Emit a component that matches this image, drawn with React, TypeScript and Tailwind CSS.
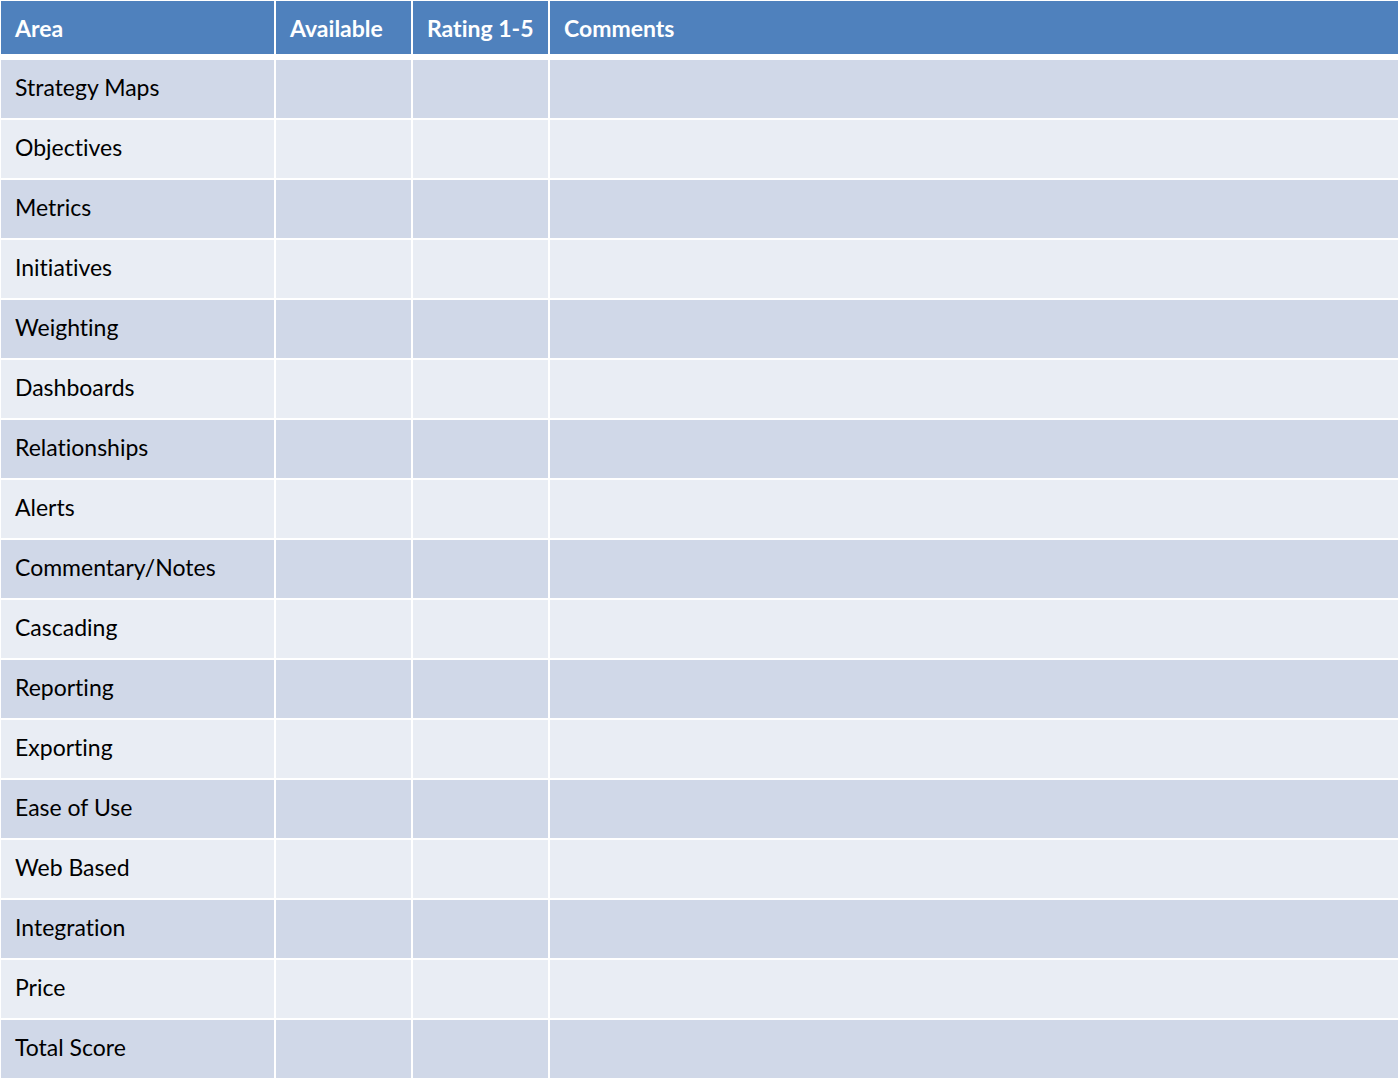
const areas = [
  'Strategy Maps',
  'Objectives',
  'Metrics',
  'Initiatives',
  'Weighting',
  'Dashboards',
  'Relationships',
  'Alerts',
  'Commentary/Notes',
  'Cascading',
  'Reporting',
  'Exporting',
  'Ease of Use',
  'Web Based',
  'Integration',
  'Price',
  'Total Score',
]

const headers = ['Area', 'Available', 'Rating 1-5', 'Comments']

export default function App() {
  return (
    <div className="w-[1400px] h-[1078px] bg-white overflow-hidden font-['Lato',sans-serif] [font-variant-ligatures:none] pt-px pl-px">
      <div className="grid grid-cols-[273px_135px_135px_848px] gap-x-[2px]">
        {headers.map((h) => (
          <div key={h} className="h-[53px] bg-[#4f81bd] text-white font-bold text-[23px] flex items-center px-[14px] pt-[2px]">
            {h}
          </div>
        ))}
      </div>
      <div className="grid grid-cols-[273px_135px_135px_848px] gap-x-[2px] gap-y-[2px] mt-[6px]">
        {areas.map((a, i) => {
          const bg = i % 2 === 0 ? 'bg-[#d0d8e8]' : 'bg-[#e9edf4]'
          return [
            <div key={a + '0'} className={`${bg} h-[58px] flex items-center px-[14px] pb-[4px] text-[23px] text-black`}>
              {a}
            </div>,
            <div key={a + '1'} className={`${bg} h-[58px]`} />,
            <div key={a + '2'} className={`${bg} h-[58px]`} />,
            <div key={a + '3'} className={`${bg} h-[58px]`} />,
          ]
        })}
      </div>
    </div>
  )
}
